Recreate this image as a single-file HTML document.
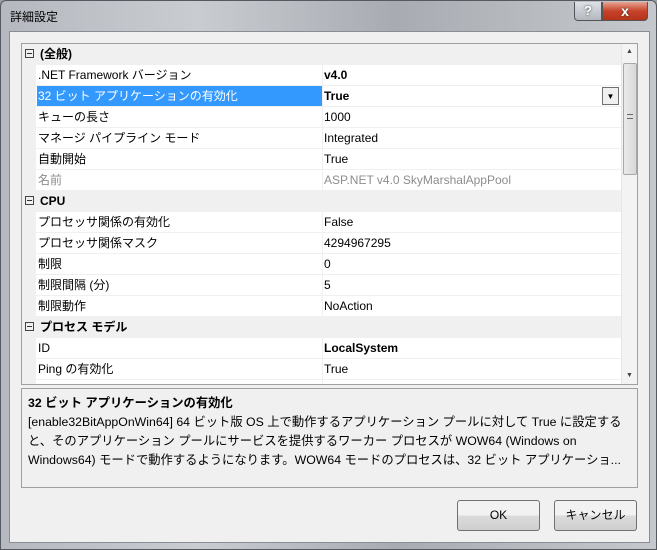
<!DOCTYPE html><html><head><meta charset="utf-8"><style>
*{margin:0;padding:0;box-sizing:border-box}
body{width:657px;height:550px;overflow:hidden;font-family:"Liberation Sans","Noto Sans CJK JP",sans-serif;font-size:12px;background:#9a9fa6;position:relative}
.win{position:absolute;left:0;top:0;width:657px;height:550px;background:linear-gradient(90deg,#b5b9bf,#c9ccd1 30%,#a8acb2 60%,#c5c8cc);border:1px solid #555a60;border-radius:6px 6px 0 0}
.title{position:absolute;left:9px;top:7px;font-size:12px;color:#000}
.client{position:absolute;left:8px;top:30px;width:641px;height:512px;background:#f0f0f0;border:1px solid #8a8e94}
.grid{position:absolute;left:20px;top:42px;width:617px;height:342px;border:1px solid #a0a0a0;background:#f0f0f0;overflow:hidden}
.row{position:absolute;left:0;width:599px;height:21px;line-height:20px}
.cat{background:#f0f0f0;font-weight:bold;padding-left:18px}
.cat .box{position:absolute;left:3px;top:5px;width:9px;height:9px;border:1px solid #444;}
.cat .box:after{content:"";position:absolute;left:1px;top:3px;width:5px;height:1px;background:#333}
.prop{left:14px;width:585px;background:#fff;border-bottom:1px solid #f0f0f0}
.prop .n{position:absolute;left:1px;top:0;width:285px;padding-left:1px}
.prop .v{position:absolute;left:286px;top:0;border-left:1px solid #f0f0f0;padding-left:1px;width:299px;height:20px}
.sel .n{background:#3399ff;color:#fff}
.gray{color:#8d8d8d}
.sb{position:absolute;left:599px;top:0;width:17px;height:340px;background:#f3f3f3;border-left:1px solid #e6e6e6}
.thumb{position:absolute;left:1px;top:19px;width:14px;height:112px;background:linear-gradient(90deg,#eaeaea,#d8d8d8);border:1px solid #a8a8a8;border-radius:2px}
.desc{position:absolute;left:20px;top:387px;width:617px;height:100px;border:1px solid #a0a0a0;padding:5px 14px 5px 6px;line-height:19px;font-size:12.3px}
.btn{position:absolute;top:499px;width:83px;height:31px;border:1px solid #707070;border-radius:3px;background:linear-gradient(#f2f2f2 50%,#dcdcdc 50%,#cfcfcf);text-align:center;line-height:29px}
</style></head><body>
<div class="win">
<div class="title">詳細設定</div>
<div style="position:absolute;left:573px;top:1px;width:28px;height:19px;border:1px solid #555;border-top:none;border-radius:0 0 0 4px;background:linear-gradient(#dde1e6,#b3b8bf);text-align:center;color:#fff;font-weight:bold;font-size:13px;line-height:18px;text-shadow:0 0 2px #333">?</div>
<div style="position:absolute;left:601px;top:1px;width:46px;height:19px;border:1px solid #555;border-top:none;border-radius:0 0 4px 0;background:linear-gradient(#e7a493,#c7432a 50%,#b5321a);text-align:center;color:#fff;font-weight:bold;font-size:14px;line-height:18px;text-shadow:0 0 2px #333">x</div>
<div class="client"></div>
<div class="grid">
<div class="row cat" style="top:0"><span class="box"></span>(全般)</div>
<div class="row prop" style="top:21px"><span class="n">.NET Framework バージョン</span><span class="v"><b>v4.0</b></span></div>
<div class="row prop sel" style="top:42px"><span class="n">32 ビット アプリケーションの有効化</span><span class="v"><b>True</b><span style="position:absolute;right:2px;top:1px;width:17px;height:18px;border:1px solid #707070;background:#f0f0f0;font-size:8px;text-align:center;line-height:17px">▼</span></span></div>
<div class="row prop" style="top:63px"><span class="n">キューの長さ</span><span class="v">1000</span></div>
<div class="row prop" style="top:84px"><span class="n">マネージ パイプライン モード</span><span class="v">Integrated</span></div>
<div class="row prop" style="top:105px"><span class="n">自動開始</span><span class="v">True</span></div>
<div class="row prop gray" style="top:126px"><span class="n">名前</span><span class="v">ASP.NET v4.0 SkyMarshalAppPool</span></div>
<div class="row cat" style="top:147px"><span class="box"></span>CPU</div>
<div class="row prop" style="top:168px"><span class="n">プロセッサ関係の有効化</span><span class="v">False</span></div>
<div class="row prop" style="top:189px"><span class="n">プロセッサ関係マスク</span><span class="v">4294967295</span></div>
<div class="row prop" style="top:210px"><span class="n">制限</span><span class="v">0</span></div>
<div class="row prop" style="top:231px"><span class="n">制限間隔 (分)</span><span class="v">5</span></div>
<div class="row prop" style="top:252px"><span class="n">制限動作</span><span class="v">NoAction</span></div>
<div class="row cat" style="top:273px"><span class="box"></span>プロセス モデル</div>
<div class="row prop" style="top:294px"><span class="n">ID</span><span class="v"><b>LocalSystem</b></span></div>
<div class="row prop" style="top:315px"><span class="n">Ping の有効化</span><span class="v">True</span></div>
<div class="row prop" style="top:336px"><span class="n"></span><span class="v"></span></div>
<div class="sb"><div style="position:absolute;left:4px;top:4px;font-size:7px;color:#444">▲</div><div class="thumb"><div style="position:absolute;left:3px;top:50px;width:6px;height:5px;border-top:1px solid #666;border-bottom:1px solid #666"></div></div><div style="position:absolute;left:4px;top:328px;font-size:7px;color:#444">▼</div></div>
</div>
<div class="desc"><b>32 ビット アプリケーションの有効化</b><br>[enable32BitAppOnWin64] 64 ビット版 OS 上で動作するアプリケーション プールに対して True に設定する<br>と、そのアプリケーション プールにサービスを提供するワーカー プロセスが WOW64 (Windows on<br>Windows64) モードで動作するようになります。WOW64 モードのプロセスは、32 ビット アプリケーショ...</div>
<div class="btn" style="left:456px">OK</div>
<div class="btn" style="left:553px">キャンセル</div>
</div>
</body></html>
